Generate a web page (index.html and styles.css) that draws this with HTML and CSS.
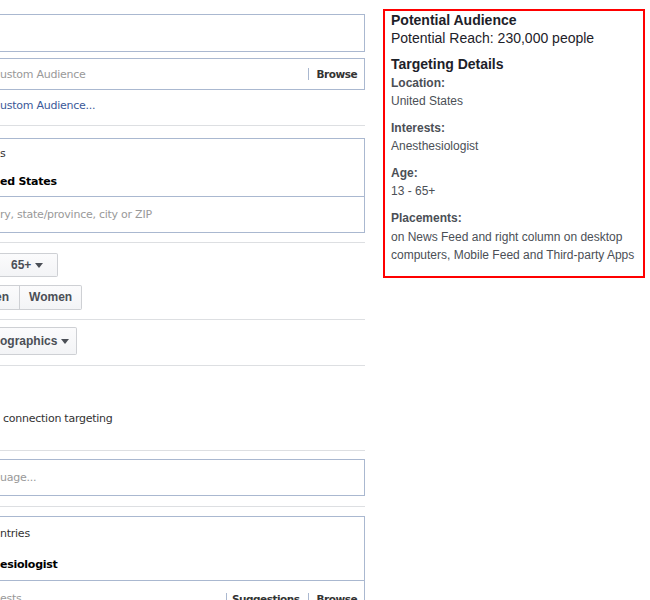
FILE: index.html
```html
<!DOCTYPE html>
<html lang="en">
<head>
    <meta charset="UTF-8">
    <meta name="viewport" content="width=device-width, initial-scale=1.0">
    <title>Audience</title>
    <link rel="stylesheet" href="styles.css">
</head>
<body>
    <div class="page">
        <section class="form">
            <div class="box box-empty"></div>
            <div class="box box-input">
                <span class="placeholder">ustom Audience</span>
                <span class="actions"><span class="action">Browse</span></span>
            </div>
            <a class="link" href="#">ustom Audience...</a>
            <hr class="rule">

            <div class="box box-tokens">
                <div class="tokens">
                    <div class="token-line">s</div>
                    <div class="token-line strong">ed States</div>
                </div>
                <div class="box-foot">
                    <span class="placeholder">ry, state/province, city or ZIP</span>
                </div>
            </div>
            <hr class="rule rule-a">

            <div class="btn btn-age">65+ <span class="caret"></span></div>
            <div class="seg">
                <span class="seg-item seg-first">en</span>
                <span class="seg-item">Women</span>
            </div>
            <hr class="rule rule-b">

            <div class="btn btn-demo">ographics <span class="caret"></span></div>
            <hr class="rule rule-c">

            <p class="plain">connection targeting</p>
            <hr class="rule rule-d">

            <div class="box box-lang">
                <span class="placeholder">uage...</span>
            </div>
            <hr class="rule rule-e">

            <div class="box box-tokens box-interests">
                <div class="tokens">
                    <div class="token-line">ntries</div>
                    <div class="token-line strong">esiologist</div>
                </div>
                <div class="box-foot">
                    <span class="placeholder">ests</span>
                    <span class="actions">
                        <span class="action">Suggestions</span>
                        <span class="action">Browse</span>
                    </span>
                </div>
            </div>
        </section>

        <aside class="summary">
            <h3>Potential Audience</h3>
            <p class="reach">Potential Reach: 230,000 people</p>
            <h3 class="details-title">Targeting Details</h3>
            <dl>
                <dt>Location:</dt>
                <dd>United States</dd>
                <dt>Interests:</dt>
                <dd>Anesthesiologist</dd>
                <dt>Age:</dt>
                <dd>13 - 65+</dd>
                <dt>Placements:</dt>
                <dd class="long">on News Feed and right column on desktop computers, Mobile Feed and Third-party Apps</dd>
            </dl>
        </aside>
    </div>
</body>
</html>
```

FILE: styles.css
```css
body {
    margin: 0;
    background: #fff;
    font-family: "DejaVu Sans", "Liberation Sans", sans-serif;
    font-size: 11px;
    color: #333;
}
.page {
    display: flex;
    gap: 18px;
    align-items: flex-start;
}
.form {
    width: 365px;
    padding-top: 14px;
    overflow: hidden;
    letter-spacing: -0.25px;
}
.box {
    border: 1px solid #aab8d0;
    border-left: none;
    background: #fff;
}
.box-empty {
    height: 36px;
}
.box-input {
    height: 30px;
    margin-top: 6px;
    display: flex;
    align-items: center;
    justify-content: space-between;
}
.placeholder {
    color: #999;
}
.actions {
    display: flex;
    align-items: center;
}
.action {
    font-weight: bold;
    font-size: 10.5px;
    letter-spacing: -0.5px;
    color: #333;
    border-left: 1px solid #aab8d0;
    line-height: 12px;
    padding: 0 7px 0 8px;
}
.link {
    display: block;
    margin-top: 8px;
    line-height: 16px;
    color: #3b5998;
    text-decoration: none;
}
.rule {
    border: none;
    border-top: 1px solid #dddfe2;
    margin: 11px 0 0;
    height: 0;
}
.box-tokens {
    margin-top: 12px;
}
.tokens {
    padding: 7px 0 6px;
    display: flex;
    flex-direction: column;
    gap: 12px;
}
.token-line {
    line-height: 16px;
}
.strong {
    font-weight: bold;
    color: #000;
}
.box-foot {
    border-top: 1px solid #aab8d0;
    height: 35px;
    display: flex;
    align-items: center;
    justify-content: space-between;
}
.rule-a {
    margin-top: 9px;
}
.btn, .seg {
    font-family: "Liberation Sans", Arial, sans-serif;
    font-weight: bold;
    font-size: 12px;
    letter-spacing: 0;
    color: #4b4f56;
    background: linear-gradient(#fbfbfc, #f3f4f6);
    border: 1px solid #ced0d4;
    border-left: none;
    border-radius: 0 2px 2px 0;
    box-sizing: border-box;
    display: flex;
    align-items: center;
    width: max-content;
}
.btn-age {
    margin-top: 10px;
    height: 24px;
    width: 58px;
    padding-left: 11px;
}
.caret {
    display: inline-block;
    width: 0;
    height: 0;
    border-left: 4px solid transparent;
    border-right: 4px solid transparent;
    border-top: 5px solid #4b4f56;
    margin-left: 4px;
}
.seg {
    margin-top: 8px;
    height: 25px;
}
.seg-item {
    padding: 0 9px 0 9px;
    line-height: 23px;
}
.seg-first {
    margin-left: -5px;
    padding: 0 10px 0 0;
    border-right: 1px solid #ced0d4;
}
.rule-b {
    margin-top: 9px;
}
.btn-demo {
    margin-top: 7px;
    height: 28px;
    width: 77px;
    padding-left: 0;
}
.rule-c {
    margin-top: 10px;
}
.plain {
    margin: 45px 0 0;
    padding-left: 3px;
    line-height: 16px;
}
.rule-d {
    margin-top: 23px;
}
.box-lang {
    margin-top: 8px;
    height: 35px;
    display: flex;
    align-items: center;
}
.rule-e {
    margin-top: 10px;
}
.box-interests {
    margin-top: 9px;
}
.box-interests .tokens {
    padding: 9px 0 7px;
    gap: 15px;
}
.box-interests .actions .action:first-child {
    padding: 0 8px 0 5px;
}
.summary {
    margin-top: 9px;
    width: 262px;
    box-sizing: border-box;
    border: 2px solid #ff0000;
    padding: 0 4px 12px 6px;
    font-family: "Liberation Sans", Arial, sans-serif;
    color: #4b4f56;
    font-size: 12px;
}
.summary h3 {
    margin: 0;
    font-size: 14px;
    line-height: 18px;
    color: #1d2129;
}
.reach {
    margin: 0;
    font-size: 14px;
    line-height: 18px;
    color: #1d2129;
}
.details-title {
    margin-top: 8px !important;
}
dl {
    margin: 0;
}
dt {
    font-weight: bold;
    line-height: 18px;
    margin-top: 9px;
}
dt:first-child {
    margin-top: 1px;
}
dd {
    margin: 0;
    line-height: 18px;
}
dd.long {
    margin-top: 1px;
}
```
